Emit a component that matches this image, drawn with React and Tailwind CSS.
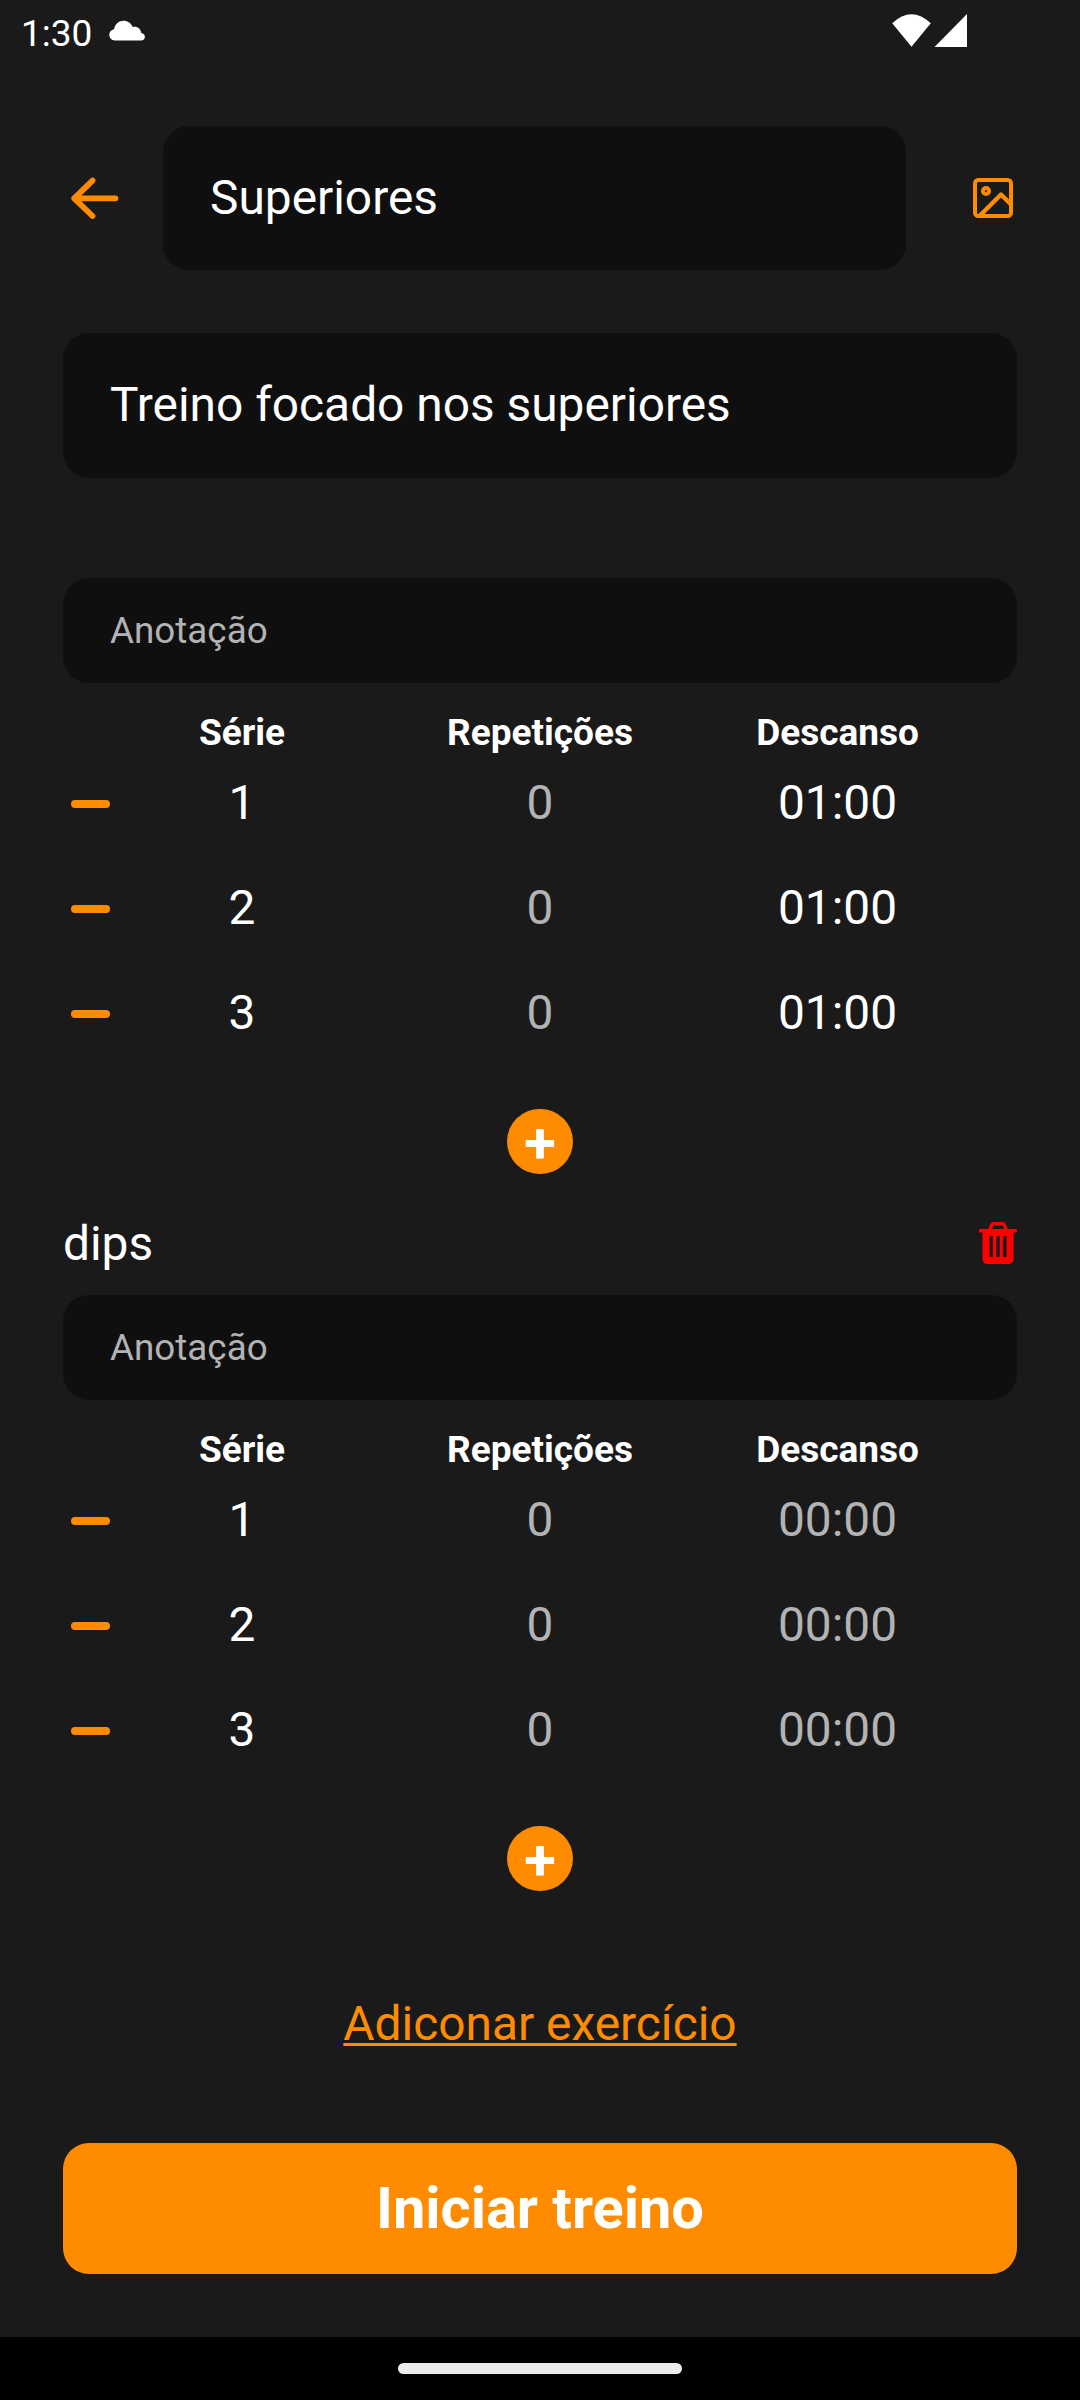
const FONT = "font-['Roboto',sans-serif]";

function Cloud() {
  return (
    <svg width="38" height="24" viewBox="0 0 38 24" fill="#fff" className="ml-[16px] mt-[19px]">
      <path d="M7 21.500C3.500 21.500 1.300 18.800 1.300 15.800C1.300 12.800 3.400 10.700 6 10.200C7 5 11 1.700 15.500 1.700C19.800 1.700 23 4.200 24.700 7.900C28.800 6.700 33 9.600 33.300 14.200C35.500 14.300 36.900 15.700 36.900 17.800C36.900 20 35.300 21.500 33 21.500Z" />
    </svg>
  );
}

function StatusBar() {
  return (
    <div className="flex h-[63px] items-start">
      <div className="ml-[21px] mt-[12px] text-[37px] leading-[43px]">1:30</div>
      <Cloud />
      <svg width="78" height="36" viewBox="0 0 78 36" fill="#fff" className="ml-auto mr-[112px] mt-[13px]">
        <path d="M2.200 10.300Q21.500 -7.600 40.800 10.300L21.500 33.800Z" />
        <path d="M44.500 34L77 1V34Z" />
      </svg>
    </div>
  );
}

function Trash() {
  return (
    <svg width="38" height="42" viewBox="0 128 1408 1536" preserveAspectRatio="none" fill="#ff0000">
      <path d="M512 1376v-704q0-14-9-23t-23-9h-64q-14 0-23 9t-9 23v704q0 14 9 23t23 9h64q14 0 23-9t9-23zm256 0v-704q0-14-9-23t-23-9h-64q-14 0-23 9t-9 23v704q0 14 9 23t23 9h64q14 0 23-9t9-23zm256 0v-704q0-14-9-23t-23-9h-64q-14 0-23 9t-9 23v704q0 14 9 23t23 9h64q14 0 23-9t9-23zm-544-992h448l-48-117q-7-9-17-11h-317q-10 2-17 11zm928 32v64q0 14-9 23t-23 9h-96v948q0 83-47 143.500t-113 60.500h-832q-66 0-113-58.500t-47-141.500v-952h-96q-14 0-23-9t-9-23v-64q0-14 9-23t23-9h309l70-167q15-37 54-63t79-26h320q40 0 79 26t54 63l70 167h309q14 0 23 9t9 23z" />
    </svg>
  );
}

function Exercise({ rest, restClass }) {
  return (
    <>
      <div className="flex h-[105px] items-center rounded-[26px] bg-[#0f0f0f] px-[47px] text-[36.800px] text-[#b3b3b3]">
        Anotação
      </div>
      <div className="mt-[31px] grid h-[37px] grid-cols-[65px_228px_368px_227px] text-center text-[37px] font-bold leading-[37px]">
        <span />
        <span>Série</span>
        <span>Repetições</span>
        <span>Descanso</span>
      </div>
      {[1, 2, 3].map((n) => (
        <div
          key={n}
          className="grid h-[105px] grid-cols-[65px_228px_368px_227px] items-center text-center text-[47.850px] leading-[55px]"
        >
          <span className="ml-[8px] mt-px h-[8px] w-[39px] rounded-full bg-[#ff8c00]" />
          <span>{n}</span>
          <span className="text-[#b3b3b3]">0</span>
          <span className={restClass}>{rest}</span>
        </div>
      ))}
      <button className="mx-auto mt-[43px] flex h-[65px] w-[66px] items-center justify-center rounded-full bg-[#ff8c00] pt-[3px] text-[58px] font-bold leading-[61px]">
        +
      </button>
    </>
  );
}

export default function App() {
  return (
    <div className={`${FONT} flex h-[2400px] w-[1080px] flex-col bg-[#1a1a1a] text-white`}>
      <StatusBar />
      <main className="flex flex-1 flex-col px-[63px] pt-[63px]">
        <header className="flex h-[144px] items-center">
          <svg width="63" height="63" viewBox="0 0 63 63" fill="none" stroke="#ff8c00" strokeWidth="5.800" strokeLinecap="round" strokeLinejoin="round">
            <path d="M29.500 13.600L11.200 31.300L29.500 49M11.200 31.300H52.500" />
          </svg>
          <div className="ml-[37px] flex h-[144px] w-[743px] items-center rounded-[26px] bg-[#0f0f0f] px-[47px] pt-[2px] text-[47.850px]">
            Superiores
          </div>
          <svg width="40" height="40" viewBox="0 0 40 40" fill="none" stroke="#ff8c00" strokeWidth="4" strokeLinejoin="round" className="ml-[67px]">
            <rect x="2" y="2" width="36" height="36" rx="3.200" />
            <circle cx="13" cy="13" r="3" />
            <path d="M7 37.500L28 16.500L38 26.500" strokeWidth="4.400" />
          </svg>
        </header>
        <div className="mt-[63px] flex h-[145px] items-center rounded-[26px] bg-[#0f0f0f] px-[47px] text-[47.850px]">
          Treino focado nos superiores
        </div>
        <section className="mt-[100px]">
          <Exercise rest="01:00" restClass="text-white" />
        </section>
        <section>
          <div className="flex h-[121px] items-start justify-between">
            <h2 className="mt-[43px] text-[47.850px] leading-[55px]">dips</h2>
            <div className="mt-[48px]">
              <Trash />
            </div>
          </div>
          <Exercise rest="00:00" restClass="text-[#b3b3b3]" />
        </section>
        <a className="mx-auto mt-[106px] text-[47.850px] leading-[55px] text-[#ff8c00] underline decoration-[3px] underline-offset-[3px]">
          Adiconar exercício
        </a>
        <button className="mt-[91px] h-[131px] rounded-[26px] bg-[#ff8c00] text-[57.750px] font-bold">Iniciar treino</button>
      </main>
      <div className="flex h-[63px] justify-center bg-black">
        <div className="mt-[26px] h-[11px] w-[284px] rounded-full bg-[#ebebeb]" />
      </div>
    </div>
  );
}
